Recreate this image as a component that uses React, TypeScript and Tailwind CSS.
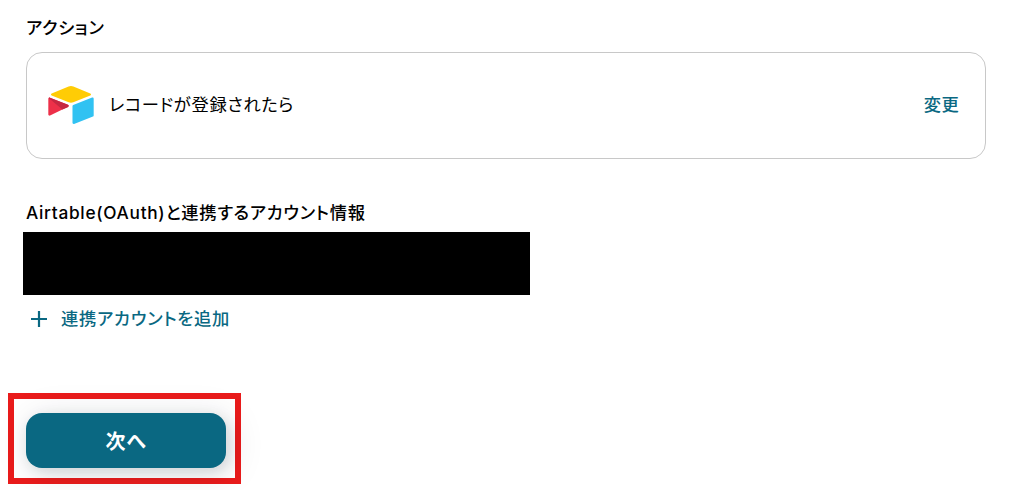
import type { ReactNode } from 'react'

function AirtableLogo() {
  return (
    <svg viewBox="11 10.4 177 148.2" className="h-[38px] w-[46px] shrink-0" aria-hidden="true">
      <path
        fill="#ffcc05"
        d="M90.039 12.368 24.079 39.66c-3.667 1.519-3.63 6.729.062 8.192l66.235 26.266a24.58 24.58 0 0 0 18.12 0l66.236-26.266c3.69-1.463 3.729-6.673.062-8.192l-65.96-27.292a24.58 24.58 0 0 0-18.795 0"
      />
      <path
        fill="#31c2f2"
        d="M105.312 88.46v65.617c0 3.12 3.147 5.258 6.048 4.108l73.806-28.648a4.418 4.418 0 0 0 2.79-4.108V59.813c0-3.121-3.147-5.258-6.048-4.108l-73.806 28.648a4.42 4.42 0 0 0-2.79 4.108"
      />
      <path
        fill="#ed3049"
        d="m88.078 91.846-21.904 10.576-2.224 1.075-46.238 22.155c-2.93 1.414-6.672-.722-6.672-3.978V60.088c0-1.178.604-2.195 1.414-2.96a5.024 5.024 0 0 1 1.12-.84c1.104-.663 2.68-.84 4.02-.31L87.71 83.76c3.564 1.414 3.844 6.408.368 8.087"
      />
      <path
        fill="#c62842"
        d="m88.078 91.846-21.904 10.576-53.72-45.295a5.024 5.024 0 0 1 1.12-.839c1.104-.663 2.68-.84 4.02-.31L87.71 83.76c3.564 1.414 3.844 6.408.368 8.087"
      />
    </svg>
  )
}

function PlusIcon() {
  return (
    <svg viewBox="0 0 16 16" className="size-4 shrink-0" fill="none" stroke="currentColor" strokeWidth="2.2" aria-hidden="true">
      <path d="M8 0v16M0 8h16" />
    </svg>
  )
}

function FieldLabel({ children }: { children: ReactNode }) {
  return <h2 className="text-[17.3px] leading-6 font-medium tracking-[0.0405em] whitespace-nowrap">{children}</h2>
}

export default function App() {
  return (
    <main className="h-[490px] overflow-hidden bg-white font-['Inter','Noto_Sans_CJK_JP',sans-serif] tracking-[0.04em] text-black [font-feature-settings:'palt']">
      <section className="pt-4 pr-[23px] pl-[26px]">
        <FieldLabel>アクション</FieldLabel>
        <div className="mt-3 flex h-[107px] items-center rounded-[16px] border border-[#c8c8c8] pr-[25.5px] pb-[2px] pl-[21px]">
          <AirtableLogo />
          <p className="ml-[15px] text-[17.3px] leading-6">レコードが登録されたら</p>
          <button className="ml-auto text-[17.3px] leading-6 font-medium text-[#0a6882]">変更</button>
        </div>
      </section>

      <section className="mt-[42px] pl-[26px]">
        <FieldLabel>Airtable(OAuth)と連携するアカウント情報</FieldLabel>
        <div className="mt-[7px] -ml-[3px] h-[63px] w-[507px] bg-black" />
        <button className="mt-[12px] ml-[5px] flex items-center gap-[14px] text-[17.3px] leading-6 font-medium tracking-[0.045em] text-[#0a6882]">
          <PlusIcon />
          連携アカウントを追加
        </button>
      </section>

      <div className="mt-[62px] ml-2 h-[91px] w-[233px] border-6 border-[#e91b1b] px-3 pt-[14px]">
        <button className="h-[55px] w-[200px] rounded-[16px] bg-[#0a6882] pt-[2px] text-[20px] font-bold text-white shadow-[4px_4px_36px_rgba(12,32,48,0.12),3px_4px_14px_rgba(12,32,48,0.13)]">
          次へ
        </button>
      </div>
    </main>
  )
}
